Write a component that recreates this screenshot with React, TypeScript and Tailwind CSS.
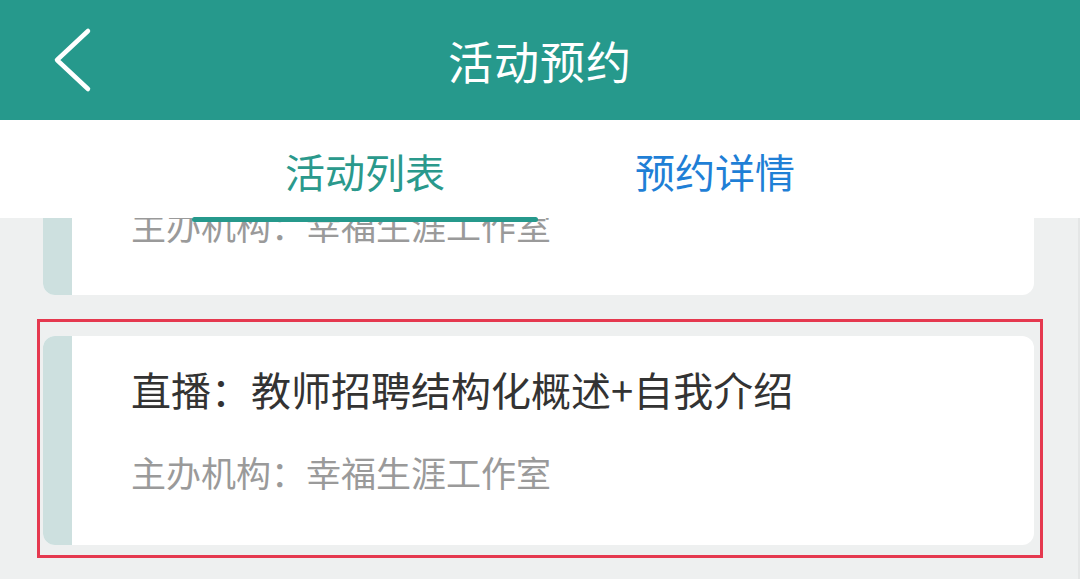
import React from "react";

const font = {
  fontFamily: '"Noto Sans CJK SC", "Noto Sans", sans-serif',
};

function ActivityCard({ title, host }: { title?: string; host: string }) {
  return (
    <div className="flex h-[209px] rounded-[12px] bg-white overflow-hidden">
      <div className="w-[29px] bg-[#cde0df]" />
      <div className="flex flex-col pl-[59px]">
        {title && (
          <p className="mt-[28px] text-[40px] leading-[50px] text-[#333333]">{title}</p>
        )}
        <p className="mt-[38px] text-[35px] leading-[40px] text-[#9a9a9a]">{host}</p>
      </div>
    </div>
  );
}

export default function App() {
  return (
    <div className="w-[1080px] h-[579px] flex flex-col bg-[#eef0f0] relative overflow-hidden" style={font}>
      {/* header */}
      <header className="h-[120px] shrink-0 bg-[#26998c] relative flex items-center justify-center">
        <button className="absolute left-[52px] top-[27px]">
          <svg width="40" height="66" viewBox="0 0 40 66" fill="none">
            <polyline
              points="36,4 5,33 36,62"
              stroke="white"
              strokeWidth="4.5"
              strokeLinecap="round"
              strokeLinejoin="round"
            />
          </svg>
        </button>
        <h1 className="text-[45px] leading-none text-white tracking-[1px]">活动预约</h1>
      </header>

      {/* tabs */}
      <nav className="h-[98px] shrink-0 bg-white relative z-10 flex justify-center">
        <div className="relative w-[350px] flex items-center justify-center">
          <span className="text-[40px] text-[#2a998c] leading-none mt-[4px]">活动列表</span>
          <div className="absolute left-[2px] right-[2px] bottom-[-4px] h-[5px] bg-[#26998c] rounded-full" />
        </div>
        <div className="w-[350px] flex items-center justify-center">
          <span className="text-[40px] text-[#1f7fd6] leading-none mt-[4px]">预约详情</span>
        </div>
      </nav>

      {/* list */}
      <main className="flex-1 overflow-hidden px-[43px] pr-[44px] border-r-2 border-[#e4e6e6]">
        <div className="mt-[-132px] flex flex-col gap-[41px]">
          <div className="flex h-[209px] rounded-[12px] bg-white overflow-hidden">
            <div className="w-[29px] bg-[#cde0df]" />
            <div className="flex flex-col justify-end pl-[59px] pb-[50px]">
              <p className="text-[35px] leading-[40px] text-[#9a9a9a]">主办机构：幸福生涯工作室</p>
            </div>
          </div>
          <ActivityCard title="直播：教师招聘结构化概述+自我介绍" host="主办机构：幸福生涯工作室" />
        </div>
      </main>

      {/* annotation box */}
      <div className="absolute left-[37px] top-[319px] w-[1006px] h-[239px] border-[3px] border-[#e5394f] pointer-events-none" />
    </div>
  );
}
